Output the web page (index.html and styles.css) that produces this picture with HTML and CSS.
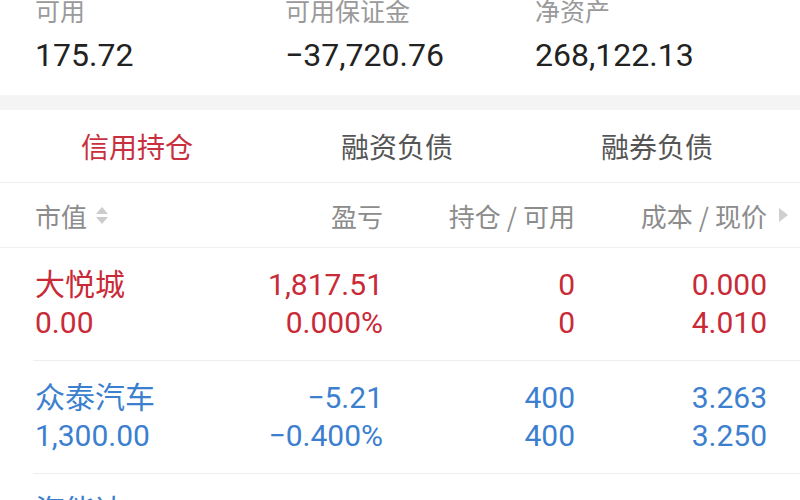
FILE: index.html
```html
<!DOCTYPE html>
<html lang="zh-CN">
<head>
<meta charset="utf-8">
<link rel="stylesheet" href="styles.css">
</head>
<body>
<div class="summary">
  <div class="stat"><div class="label">可用</div><div class="value">175.72</div></div>
  <div class="stat"><div class="label">可用保证金</div><div class="value">−37,720.76</div></div>
  <div class="stat"><div class="label">净资产</div><div class="value">268,122.13</div></div>
</div>
<div class="band"></div>
<div class="tabs">
  <div class="tab active">信用持仓</div>
  <div class="tab">融资负债</div>
  <div class="tab">融券负债</div>
</div>
<div class="thead">
  <div class="th first">市值<span class="sort"><span class="up"></span><span class="down"></span></span></div>
  <div class="th">盈亏</div>
  <div class="th">持仓<span class="sl">/</span>可用</div>
  <div class="th">成本<span class="sl">/</span>现价</div>
  <span class="more"></span>
</div>
<div class="row red">
  <div class="cell first"><div>大悦城</div><div>0.00</div></div>
  <div class="cell"><div>1,817.51</div><div>0.000%</div></div>
  <div class="cell"><div>0</div><div>0</div></div>
  <div class="cell"><div>0.000</div><div>4.010</div></div>
</div>
<div class="row blue">
  <div class="cell first"><div>众泰汽车</div><div>1,300.00</div></div>
  <div class="cell"><div>−5.21</div><div>−0.400%</div></div>
  <div class="cell"><div>400</div><div>400</div></div>
  <div class="cell"><div>3.263</div><div>3.250</div></div>
</div>
<div class="row blue">
  <div class="cell first"><div>海能达</div><div>211,500.00</div></div>
  <div class="cell"><div>−104.63</div><div>−0.049%</div></div>
  <div class="cell"><div>14100</div><div>14100</div></div>
  <div class="cell"><div>15.287</div><div>15.000</div></div>
</div>
</body>
</html>
```
FILE: styles.css
```css
html, body {
  margin: 0;
  padding: 0;
  background: #fff;
  overflow: hidden;
}
body {
  width: 800px;
  height: 500px;
  font-family: Roboto, "Noto Sans CJK SC", sans-serif;
}
.summary {
  display: grid;
  grid-template-columns: 250px 250px 250px;
  padding-left: 35px;
  margin-top: -3px;
  height: 98px;
}
.label {
  font-size: 25px;
  line-height: 32px;
  color: #9a9a9a;
}
.value {
  font-size: 32px;
  line-height: 40px;
  color: #222;
  margin-top: 6px;
}
.band {
  height: 15px;
  background: #f4f4f4;
}
.tabs {
  display: grid;
  grid-template-columns: 260px 260px 260px;
  padding-left: 7px;
  height: 72px;
  align-items: center;
  border-bottom: 1px solid #eeeeee;
}
.tab {
  text-align: center;
  font-size: 28px;
  color: #555;
  font-family: "Noto Sans CJK SC", sans-serif;
}
.tab.active {
  color: #c8303f;
}
.thead {
  display: grid;
  grid-template-columns: 156px 192px 192px 192px;
  padding-left: 35px;
  height: 64px;
  align-items: center;
  border-bottom: 1px solid #efefef;
  position: relative;
}
.th {
  text-align: right;
  font-size: 26px;
  color: #8c8c8c;
  font-family: "Noto Sans CJK SC", sans-serif;
}
.th .sl {
  margin: 0 6px;
}
.th.first {
  text-align: left;
  display: flex;
  align-items: center;
}
.sort {
  display: inline-flex;
  flex-direction: column;
  gap: 3px;
  margin-left: 9px;
}
.sort .up, .sort .down {
  width: 0;
  height: 0;
  border-left: 6px solid transparent;
  border-right: 6px solid transparent;
}
.sort .up { border-bottom: 7px solid #cccccc; }
.sort .down { border-top: 7px solid #cccccc; }
.more {
  position: absolute;
  left: 779px;
  top: 25px;
  width: 0;
  height: 0;
  border-top: 7px solid transparent;
  border-bottom: 7px solid transparent;
  border-left: 9px solid #cfcfcf;
}
.row {
  display: grid;
  grid-template-columns: 156px 192px 192px 192px;
  margin-left: 33px;
  padding: 18px 0 18px 2px;
  border-bottom: 1px solid #eeeeee;
  font-size: 30px;
  line-height: 38px;
}
.cell {
  text-align: right;
  white-space: nowrap;
}
.cell.first {
  text-align: left;
}
.row.red { color: #c92a38; }
.row.blue { color: #3d7fcf; }
```
